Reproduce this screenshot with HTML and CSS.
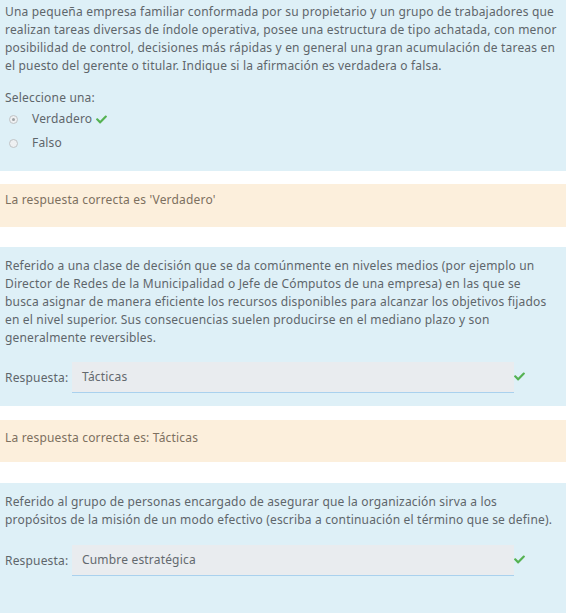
FILE: index.html
```html
<!DOCTYPE html>
<html lang="es">
<head>
<meta charset="utf-8">
<link rel="stylesheet" href="styles.css">
</head>
<body>
<div class="page">
  <section class="que que-first">
    <p class="qtext">Una pequeña empresa familiar conformada por su propietario y un grupo de trabajadores que realizan tareas diversas de índole operativa, posee una estructura de tipo achatada, con menor posibilidad de control, decisiones más rápidas y en general una gran acumulación de tareas en el puesto del gerente o titular. Indique si la afirmación es verdadera o falsa.</p>
    <div class="prompt">Seleccione una:</div>
    <div class="options">
      <div class="opt">
        <span class="radio checked"></span>
        <span class="opt-label">Verdadero</span>
        <svg class="tick tick-inline" viewBox="0 0 512 512"><path d="M173.898 439.404l-166.4-166.4c-9.997-9.997-9.997-26.206 0-36.204l36.203-36.204c9.997-9.998 26.207-9.998 36.204 0L192 312.69 432.095 72.596c9.997-9.997 26.207-9.997 36.204 0l36.203 36.204c9.997 9.997 9.997 26.206 0 36.204l-294.4 294.401c-9.998 9.997-26.207 9.997-36.204-.001z"/></svg>
      </div>
      <div class="opt">
        <span class="radio"></span>
        <span class="opt-label">Falso</span>
      </div>
    </div>
  </section>

  <div class="outcome outcome-1">La respuesta correcta es 'Verdadero'</div>

  <section class="que">
    <p class="qtext">Referido a una clase de decisión que se da comúnmente en niveles medios (por ejemplo un Director de Redes de la Municipalidad o Jefe de Cómputos de una empresa) en las que se busca asignar de manera eficiente los recursos disponibles para alcanzar los objetivos fijados en el nivel superior. Sus consecuencias suelen producirse en el mediano plazo y son generalmente reversibles.</p>
    <div class="answer">
      <span class="ans-label">Respuesta:</span>
      <span class="ans-input">Tácticas</span>
      <svg class="tick" viewBox="0 0 512 512"><path d="M173.898 439.404l-166.4-166.4c-9.997-9.997-9.997-26.206 0-36.204l36.203-36.204c9.997-9.998 26.207-9.998 36.204 0L192 312.69 432.095 72.596c9.997-9.997 26.207-9.997 36.204 0l36.203 36.204c9.997 9.997 9.997 26.206 0 36.204l-294.4 294.401c-9.998 9.997-26.207 9.997-36.204-.001z"/></svg>
    </div>
  </section>

  <div class="outcome outcome-2">La respuesta correcta es: Tácticas</div>

  <section class="que que-last">
    <p class="qtext">Referido al grupo de personas encargado de asegurar que la organización sirva a los propósitos de la misión de un modo efectivo (escriba a continuación el término que se define).</p>
    <div class="answer">
      <span class="ans-label">Respuesta:</span>
      <span class="ans-input">Cumbre estratégica</span>
      <svg class="tick" viewBox="0 0 512 512"><path d="M173.898 439.404l-166.4-166.4c-9.997-9.997-9.997-26.206 0-36.204l36.203-36.204c9.997-9.998 26.207-9.998 36.204 0L192 312.69 432.095 72.596c9.997-9.997 26.207-9.997 36.204 0l36.203 36.204c9.997 9.997 9.997 26.206 0 36.204l-294.4 294.401c-9.998 9.997-26.207 9.997-36.204-.001z"/></svg>
    </div>
  </section>
</div>
</body>
</html>
```
FILE: styles.css
```css
html, body {
  margin: 0;
  padding: 0;
  background: #ffffff;
}
body {
  font-family: "Noto Sans", "Open Sans", sans-serif;
  font-size: 12px;
  line-height: 18px;
  letter-spacing: 0.18px;
  color: #5e666b;
  overflow: hidden;
}
.page {
  width: 566px;
  display: flex;
  flex-direction: column;
}
.que {
  background: #def0f7;
  padding: 10px 11px 13px 5px;
}
.que-first {
  margin-top: -7px;
  padding-right: 4px;
  padding-bottom: 16px;
}
.que-last {
  padding-bottom: 40px;
}
.qtext {
  margin: 0;
}
.prompt {
  margin-top: 14px;
}
.options {
  display: flex;
  flex-direction: column;
}
.opt {
  display: flex;
  align-items: center;
  height: 24px;
}
.radio {
  box-sizing: border-box;
  width: 9px;
  height: 9px;
  margin-left: 4px;
  margin-right: 14px;
  border: 1px solid #bfc3c6;
  border-radius: 50%;
  background: #eef0f2;
  display: flex;
  align-items: center;
  justify-content: center;
}
.radio.checked::after {
  content: "";
  width: 3px;
  height: 3px;
  border-radius: 50%;
  background: #9da1a4;
}
.tick {
  width: 11px;
  height: 11px;
  fill: #55b252;
  flex: 0 0 auto;
}
.tick-inline {
  margin-left: 4px;
}
.outcome {
  background: #fcefdc;
  color: #7d705f;
  padding: 7px 5px 18px 5px;
}
.outcome-1 {
  margin-top: 13px;
  margin-bottom: 20px;
}
.outcome-2 {
  margin-top: 14px;
  margin-bottom: 21px;
  padding: 9px 5px 15px 5px;
}
.answer {
  display: flex;
  align-items: center;
  margin-top: 15px;
}
.que-last .answer {
  margin-top: 16px;
}
.ans-label {
  flex: 0 0 67px;
}
.ans-input {
  box-sizing: border-box;
  width: 442px;
  height: 31px;
  padding: 0 10px;
  display: flex;
  align-items: center;
  background: #e9ecef;
  border-bottom: 1px solid #a9d1ee;
  color: #63696e;
}
.answer .tick {
  margin-left: 0;
  margin-top: -2px;
}
```
